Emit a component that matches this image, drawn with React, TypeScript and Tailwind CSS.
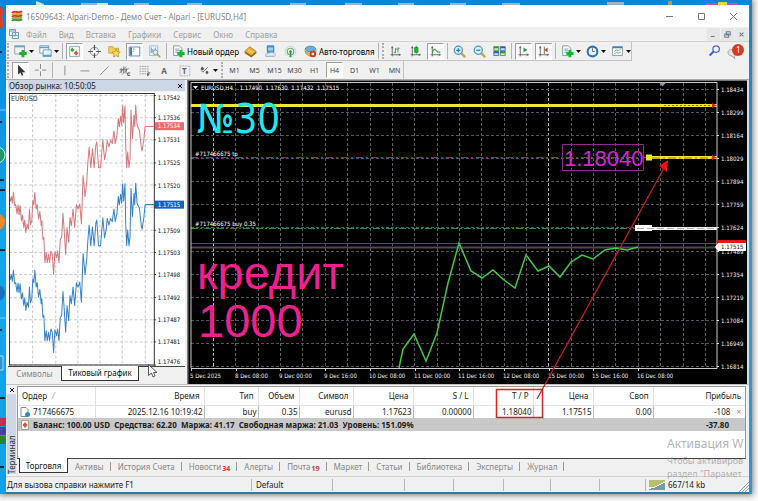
import { type ReactNode } from 'react';
import clsx from 'clsx';

const menu = ['Файл', 'Вид', 'Вставка', 'Графики', 'Сервис', 'Окно', 'Справка'];
const frames = ['M1', 'M5', 'M15', 'M30', 'H1', 'H4', 'D1', 'W1', 'MN'];

const terminalTabs = [
    { name: 'Активы' },
    { name: 'История Счета' },
    { name: 'Новости', count: '34' },
    { name: 'Алерты' },
    { name: 'Почта', count: '19' },
    { name: 'Маркет' },
    { name: 'Статьи' },
    { name: 'Библиотека' },
    { name: 'Эксперты' },
    { name: 'Журнал' },
];

const columns = [
    { name: 'Время', value: '2025.12.16 10:19:42', width: 'w-[109px]' },
    { name: 'Тип', value: 'buy', width: 'w-[54px]' },
    { name: 'Объем', value: '0.35', width: 'w-[41px]' },
    { name: 'Символ', value: 'eurusd', width: 'w-[54px]' },
    { name: 'Цена', value: '1.17623', width: 'w-[60px]' },
    { name: 'S / L', value: '0.00000', width: 'w-[60px]' },
    { name: 'T / P', value: '1.18040', width: 'w-[60px]' },
    { name: 'Цена', value: '1.17515', width: 'w-[60px]' },
    { name: 'Своп', value: '0.00', width: 'w-[60px]' },
];

const prices = [
    '1.18434', '1.18299', '1.18164', '1.18029', '1.17894', '1.17759', '1.17624',
    '1.17489', '1.17354', '1.17219', '1.17084', '1.16949', '1.16814',
];

const dates = [
    '5 Dec 2025', '8 Dec 08:00', '9 Dec 00:00', '9 Dec 16:00', '10 Dec 08:00', '11 Dec 00:00', '11 Dec 16:00',
    '12 Dec 08:00', '15 Dec 00:00', '15 Dec 16:00', '16 Dec 08:00',
];

const closes =
    '399,368 403,349 414,334 426,361 437,333 448,283 459,243 471,271 482,278 493,270 504,280 515,288 526,255 538,271 549,266 560,277 571,262 582,255 593,259 605,250 616,248 627,250 638,247';

const tickPrices = [
    '1.17542', '1.17536', '1.17531', '1.17525', '1.17520', '', '1.17509',
    '1.17503', '1.17498', '1.17492', '1.17487', '1.17481', '1.17476',
];

// x, y pairs at three units per pixel
const ticks =
    '31,350 34,362 37,348 40,368 43,335 47,375 50,372 54,400 57,373 60,402 63,375 67,420 70,403 74,440 77,418 80,455 84,430 88,445 91,385 94,432 98,420 101,360 104,372 107,335 111,385 114,372 118,415 122,392 126,435 128,420 131,475 134,470 137,545 141,515 144,545 148,520 151,545 155,510 159,520 163,580 167,512 172,530 175,510 179,545 183,475 187,470 191,398 194,440 199,520 203,440 208,485 212,410 216,435 221,385 226,440 231,372 236,385 241,370 246,430 251,285 257,348 262,300 265,250 269,200 274,262 279,205 284,262 289,195 292,185 297,262 303,262 310,178 315,238 320,212 323,180 328,200 333,180 338,190 343,152 347,190 352,165 356,115 359,140 363,108 366,135 369,77 372,128 376,77 378,190 381,262 384,215 388,262 391,235 394,90 398,175 403,105 405,140 408,75 412,135 419,150 425,205 427,212 432,180 436,139 462,139';

const axisFont = '"DejaVu Sans Condensed", "Noto Sans", sans-serif';

function Icon({ children }: { children: ReactNode }) {
    return (
        <svg viewBox="0 0 16 16" className="mx-[2px] size-[13px] shrink-0" fill="none" aria-hidden="true">
            {children}
        </svg>
    );
}

interface ToolProps {
    label: string;
    pressed?: boolean;
    menu?: boolean;
    text?: string;
    children: ReactNode;
}

function Tool({ label, pressed, menu, text, children }: ToolProps) {
    return (
        <button
            type="button"
            aria-label={label}
            className={clsx(
                'flex h-[17px] shrink-0 items-center',
                text ? '' : menu ? 'w-[22px]' : 'w-[17px] justify-center',
                pressed && 'border border-[#fff] border-t-[#a0a0a0] border-l-[#a0a0a0] bg-[#f8f8f8]',
            )}
        >
            <Icon>{children}</Icon>
            {text && <span className="whitespace-nowrap text-[8px] text-black">{text}</span>}
            {menu && (
                <svg viewBox="0 0 5 3" className="h-[3px] w-[5px] shrink-0" aria-hidden="true">
                    <path d="M0 0h5L2.5 3z" fill="#111" />
                </svg>
            )}
        </button>
    );
}

function Separator() {
    return <span className="h-4 w-px shrink-0 bg-[#b4b4b4]" />;
}

function Grip() {
    return <span className="h-4 w-0 shrink-0 border-l-2 border-dotted border-[#b0b0b0]" />;
}

function Axes() {
    return <path d="M4 2v12M2 12h12M3 4l1-2 1 2M12 11l2 1-2 1" stroke="#555" />;
}

function Plus() {
    return <path d="M11 6v9M6.500 10.500h9" stroke="#18b52c" strokeWidth="3.500" />;
}

function Page() {
    return (
        <>
            <path d="M2 1h7l3 3v9H2z" fill="#f7f9fb" stroke="#7b8894" />
            <path d="M4 5h5M4 7h5M4 9h4" stroke="#8297a8" />
        </>
    );
}

function Lens({ plus }: { plus?: boolean }) {
    return (
        <>
            <path d="m10 10 5 5" stroke="#d4a63a" strokeWidth="3" />
            <circle cx="6.5" cy="6.5" r="5" fill="#d5ecfa" stroke="#4a94c8" strokeWidth="1.5" />
            <path d={plus ? 'M4 6.5h5M6.5 4v5' : 'M4 6.5h5'} stroke="#2679b5" strokeWidth="1.5" />
        </>
    );
}

function TitleBar() {
    return (
        <header className="flex h-[22px] items-center bg-white pl-[5px] pr-3">
            <svg viewBox="0 0 12 12" className="size-3" fill="none" strokeWidth="2" aria-hidden="true">
                <path d="M1 3c3-4 6 2 10-2" stroke="#d43a2c" />
                <path d="M1 5c3-4 6 2 10-2" stroke="#e8a92e" />
                <path d="M1 7c3-4 6 2 10-2" stroke="#c9402f" />
                <path d="M1 9c3-4 6 2 10-2" stroke="#8fb53b" />
                <path d="M1 11c3-4 6 2 10-2" stroke="#4d8c34" />
            </svg>
            <h1 className="ml-[3px] grow whitespace-nowrap text-[8px] text-[#858585]">
                16509643: Alpari-Demo - Демо Счет - Alpari - [EURUSD,H4]
            </h1>
            <div className="flex items-center gap-[25px] text-[#777]">
                <button type="button" aria-label="Свернуть">
                    <svg viewBox="0 0 7 7" className="size-[7px]" stroke="currentColor"><path d="M0 3.5h7" /></svg>
                </button>
                <button type="button" aria-label="Развернуть">
                    <svg viewBox="0 0 7 7" className="size-[7px]" stroke="currentColor" fill="none"><path d="M.5.5h6v6h-6z" /></svg>
                </button>
                <button type="button" aria-label="Закрыть">
                    <svg viewBox="0 0 7 7" className="size-[7px]" stroke="currentColor"><path d="m0 0 7 7M7 0 0 7" /></svg>
                </button>
            </div>
        </header>
    );
}

function MenuBar() {
    return (
        <nav className="flex h-[14px] items-center pl-[3px] pr-px text-[#a0a0a0]">
            <svg viewBox="0 0 10 10" className="size-[10px]" fill="#eef5fa" stroke="#6aa0c2" aria-hidden="true">
                <path d="M.5.5h6v6h-6zM3.5 3.5h6v6h-6zM5 7l2-1 2 1M1 2h5" />
            </svg>
            <div className="ml-[7px] flex grow gap-3">
                {menu.map((item) => (
                    <button key={item} type="button" className="text-[8px]">{item}</button>
                ))}
            </div>
            <div className="flex gap-px text-[#6c7d93]">
                {['M1 7h5', 'M3 1h5v4H3zM1 4h5v4H1z', 'm2 2 5 5M7 2 2 7'].map((d) => (
                    <button key={d} type="button" aria-label="Окно графика" className="flex h-[13px] w-[13px] items-center justify-center bg-[#e6e6e6]">
                        <svg viewBox="0 0 9 9" className="size-[7px]" fill="none" stroke="currentColor" strokeWidth="1.3"><path d={d} /></svg>
                    </button>
                ))}
            </div>
        </nav>
    );
}

function MainToolbar() {
    return (
        <div className="flex h-5 items-center border-t border-[#d4d4d4]">
            <div className="flex h-full items-center gap-[3px] border-r border-b border-[#c4c4c4] pl-px">
                <Grip />
                <Tool label="Новый график" menu>
                    <path d="M1 1h12v10H1z" fill="#fff" stroke="#6f8faf" /><path d="M1 2h12" stroke="#6f9fcf" strokeWidth="2" /><Plus />
                </Tool>
                <Tool label="Профили" menu>
                    <path d="M1 1h11v9H1z" fill="#fff" stroke="#5a8fbe" /><path d="M5 6h10v8H5z" fill="#e5f1fa" stroke="#5a8fbe" /><path d="M1 3h11M5 13h10" stroke="#5a9fd4" strokeWidth="2" />
                </Tool>
                <Separator />
                <Tool label="Обзор рынка" pressed>
                    <path d="M2 2h12v12H2z" fill="#fff" stroke="#5c9dc9" /><path d="m5 3 3 3-3 3-2-3z" fill="#29a83d" /><path d="m10 7 3 3-3 3-3-3z" fill="#e0552b" />
                </Tool>
                <Tool label="Окно данных">
                    <circle cx="8" cy="8" r="5" stroke="#777" /><path d="M8 0v6M8 10v6M0 8h6M10 8h6" stroke="#555" strokeWidth="1.5" />
                </Tool>
                <Tool label="Навигатор">
                    <path d="M1 2h5l1 2h6v6H1z" fill="#f4cf5b" stroke="#c69c2e" /><path d="m10 5 1.600 3.200 3.400.5-2.500 2.500.6 3.500-3.100-1.700-3.100 1.700.6-3.500L5 8.700l3.400-.5z" fill="#ffdf52" stroke="#b98d22" />
                </Tool>
                <Tool label="Терминал" pressed>
                    <path d="M1.500 2.500h13v11h-13z" fill="#fff" stroke="#3f7fb8" /><path d="M2 3h3v10H2z" fill="#3f7fb8" /><path d="M6 5h2M6 8h1" stroke="#3f7fb8" />
                </Tool>
                <Tool label="Тестер стратегий">
                    <path d="M2 1h10v12H2z" fill="#eef5fa" stroke="#9ab3c7" /><path d="M4 3v7M6 5v4M9 3v4" stroke="#4a84b5" /><circle cx="9" cy="9" r="3" fill="#d7ecf8" stroke="#6a92ad" /><path d="m11 11 4 4" stroke="#c9a243" strokeWidth="2" />
                </Tool>
                <Separator />
                <Tool label="Новый ордер" text="Новый ордер"><Page /><Plus /></Tool>
                <Tool label="MetaEditor">
                    <path d="m1 8 6-6 8 6-6 6z" fill="#e9b53b" stroke="#a9761b" /><path d="m1 9 8 5 6-5" stroke="#9a6a18" strokeWidth="2" /><path d="m5 6 6 4" stroke="#ffe391" />
                </Tool>
                <Tool label="VPS">
                    <path d="M4 1h8v8H4z" fill="#4aa6e0" stroke="#2478b4" /><path d="M5 4h6M5 6h6" stroke="#d9f0ff" /><path d="M2 14c-1-4 3-4 4-4 3-2 5-1 6 0 3 0 3 4 0 4z" fill="#dce8f2" stroke="#89a5bc" />
                </Tool>
                <Tool label="Сигналы">
                    <circle cx="8" cy="8" r="6.500" stroke="#b7cfd9" /><circle cx="8" cy="8" r="4" stroke="#6bb26e" strokeWidth="1.500" /><circle cx="8" cy="8" r="1.500" fill="#2f9440" /><path d="M8 8v7" stroke="#2f9440" strokeWidth="2" />
                </Tool>
                <Tool label="Авто-торговля" text="Авто-торговля">
                    <path d="M1 7c2 4 10 4 14 0-1 9-12 9-14 0" fill="#f0c341" stroke="#b98d22" /><ellipse cx="8" cy="5" rx="6.500" ry="3.500" fill="#6ab0dc" stroke="#3a7da8" /><circle cx="11" cy="11" r="4" fill="#d93622" /><path d="M9.500 9.500h3v3h-3z" fill="#fff" />
                </Tool>
                <Separator />
                <Grip />
                <Tool label="Бары"><Axes /><path d="M8 4v6M6 9h2M8 5h2M11 3v6M11 4h2" stroke="#239a35" /></Tool>
                <Tool label="Свечи"><Axes /><path d="M9 1v10" stroke="#178929" /><path d="M7 3h4v6H7z" fill="#24b83c" stroke="#178929" /></Tool>
                <Tool label="Линия" pressed><Axes /><path d="M4 10c2-7 4-5 5-3s3 2 5 2" stroke="#2a9c3b" strokeWidth="1.300" /></Tool>
                <Separator />
                <Tool label="Увеличить"><Lens plus /></Tool>
                <Tool label="Уменьшить"><Lens /></Tool>
                <Tool label="Расположить окна">
                    <path d="M1 2h6v5H1zM9 8h6v5H9z" fill="#cfeabf" stroke="#3b8f34" /><path d="M9 2h6v5H9zM1 8h6v5H1z" fill="#cfe0f7" stroke="#2b5fae" /><path d="M1 3h6M9 9h6" stroke="#3b8f34" strokeWidth="2" /><path d="M9 3h6M1 9h6" stroke="#2b5fae" strokeWidth="2" />
                </Tool>
                <Separator />
                <Tool label="Автопрокрутка" pressed><Axes /><path d="m8 3 5 3-5 3z" fill="#27a53a" /></Tool>
                <Tool label="Сдвиг графика" pressed><Axes /><path d="M9 2v9" stroke="#555" /><path d="m9 6 4-3v6z" fill="#b34a2b" /></Tool>
                <Separator />
                <Tool label="Индикаторы" menu><Page /><Plus /></Tool>
                <Tool label="Периоды" menu>
                    <circle cx="8" cy="8" r="6" fill="#eaf5fd" stroke="#2a73b5" strokeWidth="2.500" /><path d="M8 4v4h3" stroke="#555" />
                </Tool>
                <Tool label="Шаблоны" menu>
                    <path d="M2 2h12v11H2z" fill="#fff" stroke="#6b8fa8" /><path d="M2 3h12" stroke="#3f80b6" strokeWidth="2" /><path d="m4 8 3-2 2 1 3-2M4 11l3-2 2 1 3-1" stroke="#469a4b" />
                </Tool>
            </div>
            <div className="flex grow items-center justify-end gap-1 pr-1">
                <button type="button" aria-label="Поиск">
                    <Icon><circle cx="10" cy="5" r="4" stroke="#4166c9" strokeWidth="1.500" /><path d="m7 8-5 5" stroke="#4166c9" strokeWidth="2.500" /></Icon>
                </button>
                <button type="button" aria-label="Уведомления: 1" className="flex">
                    <svg viewBox="0 0 18 16" className="h-4 w-[18px]" aria-hidden="true">
                        <path d="M1 8c0-3 8-4 9 0 1 3-2 4-3 4l1 3-3-3c-3 0-4-2-4-4" fill="#e4e4e4" stroke="#aaa" />
                        <circle cx="11" cy="6" r="6" fill="#d83a26" />
                        <text x="9" y="9" fontSize="8" fill="#fff">1</text>
                    </svg>
                </button>
            </div>
        </div>
    );
}

function DrawToolbar() {
    return (
        <div className="flex h-[18px]">
            <div className="flex items-center gap-[3px] border-r border-[#c4c4c4] pl-px">
                <Grip />
                <Tool label="Курсор" pressed><path d="M5 1v12l3-2.500 1.500 4 2-1-1.500-3.500H14z" fill="#333" /></Tool>
                <Tool label="Перекрестие"><path d="M8 0v6M8 9v6M1 7.500h5M10 7.500h5" stroke="#777" /></Tool>
                <Separator />
                <Tool label="Вертикальная линия"><path d="M8.500 2v12" stroke="#777" /></Tool>
                <Tool label="Горизонтальная линия"><path d="M3 8.500h11" stroke="#777" /></Tool>
                <Tool label="Трендовая линия"><path d="m3 13 10-10" stroke="#777" /></Tool>
                <Tool label="Канал"><path d="m2 11 8-8M5 13l8-8M4 5v6M7 3v8M10 5v7M2 7h9" stroke="#666" /><path d="M15 11h-3v3h3" stroke="#333" /></Tool>
                <Tool label="Фибоначчи"><path d="M2 3h11M2 6h11M2 9h11M2 12h8" stroke="#888" strokeDasharray="2 1" /><path d="M12 15v-4h3M12 13h2" stroke="#333" /></Tool>
                <Tool label="Текст"><text x="4" y="12" fontSize="10" fontWeight="700" fill="#666">A</text></Tool>
                <Tool label="Метка"><path d="M2.500 2.500h12v12h-12z" stroke="#888" strokeDasharray="1 1" /><text x="5" y="12" fontSize="10" fontWeight="700" fill="#666">T</text></Tool>
                <Tool label="Стрелки" menu><path d="m5 3 3 3-3 2-2-2zM11 8l2 2-2 3-2-3z" fill="#555" /><path d="m4 8 2 2 6-6" stroke="#555" /></Tool>
                <Grip />
                {frames.map((frame) => (
                    <button
                        key={frame}
                        type="button"
                        className={clsx(
                            'h-4 w-[17px] text-center text-[7px] text-[#444]',
                            frame === 'H4' && 'border border-white border-t-[#a0a0a0] border-l-[#a0a0a0] bg-[#f8f8f8]',
                        )}
                    >
                        {frame}
                    </button>
                ))}
            </div>
        </div>
    );
}

function TickChart() {
    return (
        <svg viewBox="7 91 180 273" className="block w-full" fontFamily={axisFont} fontSize="6">
            <path d="M8 92h177v272H8z" fill="#fff" />
            {[33, 56, 78, 100, 122, 145].map((x) => (
                <path key={x} d={`M${x}.5 94v269`} stroke="#c8c8c8" strokeDasharray="3 2" />
            ))}
            {tickPrices.map((price, i) => {
                const y = Math.round(94.6 + i * 22.35);
                return (
                    <g key={i}>
                        <path d={`M10 ${y}.5h144`} stroke="#ccc" strokeDasharray="3 2" />
                        <path d={`M154 ${y}.5h2`} stroke="#222" />
                        <text x="158" y={i === 0 ? 100 : i === 12 ? 363 : y + 3} fill="#111">{price}</text>
                    </g>
                );
            })}
            <g transform="translate(0 80) scale(.33333)" fill="none" strokeWidth="3" strokeLinejoin="round">
                <polyline points={ticks} stroke="#d9777a" />
                <polyline points={ticks} stroke="#3583cd" transform="translate(0 233)" />
            </g>
            <path d="M10.500 93.500h144v270h-144z" fill="none" stroke="#333" />
            <path d="M155 122h29v8h-29z" fill="#ee6a6a" />
            <path d="M155 200h29v8h-29z" fill="#0a62d8" />
            <g fill="#fff">
                <text x="158" y="128">1.17534</text>
                <text x="158" y="206">1.17515</text>
            </g>
            <text x="12" y="101" fontSize="7" fill="#333">EURUSD</text>
        </svg>
    );
}

function MarketWatch() {
    return (
        <section className="flex flex-col">
            <div className="mx-[2px] flex h-[11px] items-center justify-between bg-[#ccd6e4] px-px">
                <h2 className="text-[8px] text-[#222]">Обзор рынка: 10:50:05</h2>
                <button type="button" aria-label="Закрыть обзор рынка" className="pr-[2px]">
                    <svg viewBox="0 0 4 4" className="size-1" stroke="#111"><path d="m0 0 4 4M4 0 0 4" /></svg>
                </button>
            </div>
            <TickChart />
            <div className="mx-[2px] flex h-[15px] border-t border-[#444] text-[8px]">
                <button type="button" className="w-[53px] text-[#888]">Символы</button>
                <button type="button" className="-mt-px w-[78px] border border-t-0 border-[#333] bg-white text-[#111]">Тиковый график</button>
            </div>
        </section>
    );
}

function PriceChart() {
    return (
        <svg viewBox="187 80 562 304" className="block w-full" fontFamily={axisFont} fontSize="6" fill="none">
            <path d="M187 80h562v304H187z" fill="#000" />
            <path d="M187 80h562M187.500 80v304" stroke="#777" strokeWidth="2" />
            {Array.from({ length: 23 }, (_, i) => {
                const x = Math.round(213 + i * 22.36);
                return (
                    <path
                        key={i}
                        d={`M${x}.5 83v285`}
                        stroke={i === 0 || i === 15 ? '#b5b5b5' : '#5c5c68'}
                        strokeDasharray="3 2"
                    />
                );
            })}
            {prices.map((price, i) => {
                const y = Math.round(89 + i * 23.08);
                return (
                    <g key={price}>
                        <path d={`M191 ${y}.5h526`} stroke="#545462" strokeDasharray="3 2" />
                        <path d={`M717 ${y}.5h2`} stroke="#ddd" />
                        <text x="721" y={y + 3} fill="#eee">{price}</text>
                    </g>
                );
            })}
            {dates.map((date, i) => {
                const x = Math.round(190 + i * 44.7);
                return (
                    <g key={date}>
                        <path d={`M${x + 1}.5 368v3`} stroke="#ccc" />
                        <text x={x} y="378" fill="#eee">{date}</text>
                    </g>
                );
            })}
            <path d="M191 157.500h526" stroke="#b82424" strokeDasharray="7 3 2 3" />
            <path d="M191 228.500h526" stroke="#3f7f49" strokeDasharray="7 2 2 2" />
            <path d="M191 247.500h526" stroke="#4a4a4f" strokeWidth="2" />
            <path d="M191 243.500h526" stroke="#a82828" />
            <path d="M191 105.500h526" stroke="#f0e632" strokeWidth="3" />
            <path d="M664 105.500h53" stroke="#c8502a" strokeDasharray="2 2" />
            <path d="M646 157.500h71" stroke="#f0e632" strokeWidth="3" />
            <path d="M646 154.500h6v6h-6z" fill="#f0e632" />
            <path d="M652 158h65" stroke="#c86a1e" strokeDasharray="8 3 2 3" />
            <path d="m712 103 5 2.500-5 2.500zM712 155l5 2.500-5 2.500z" fill="#d8281c" />
            <path d="M635 225h17v6h-17z" fill="#fff" />
            <path d="M652 228.500h65" stroke="#f4f4f4" strokeWidth="3" />
            <path d="M637 228.500h80" stroke="#9bbb9b" strokeDasharray="7 3" />
            <polyline points={closes} stroke="#44c844" strokeWidth="1.500" />
            <path d="M191 368.500V82.500h526v286z" stroke="#ccc" />
            <path d="M659 82.500h7l-3.500 4z" fill="#8d99aa" />
            <path d="M717 240h29v5h-29z" fill="#e01818" />
            <path d="m715 247 3-4h28v8h-28z" fill="#fff" />
            <text x="721" y="249" fill="#111">1.17515</text>
            <g fill="#fff">
                <path d="M193 86h5l-2.500 3z" />
                <text x="201" y="90">EURUSD,H4&#160;&#160;&#160; 1.17490&#160; 1.17630&#160; 1.17432&#160; 1.17515</text>
                <text x="195" y="156">#717466675 tp</text>
                <text x="195" y="226">#717466675 buy 0.35</text>
            </g>
            <text x="197" y="133" fontSize="40" fill="#22e6f0">№30</text>
            <g fontFamily='"Liberation Sans", Arial, sans-serif'>
                <text x="197" y="289" fontSize="47" fill="#ee2090">кредит</text>
                <text x="198" y="337" fontSize="47" fill="#ee2090">1000</text>
                <path d="M562.500 144.500h81v26h-81z" stroke="#8a2a8a" />
                <text x="564" y="166" fontSize="22" fill="#d424d4">1.18040</text>
            </g>
            <path d="M748 80v304" stroke="#ddd" strokeWidth="2" />
        </svg>
    );
}

function TradeTable() {
    return (
        <table className="w-full table-fixed border-collapse whitespace-nowrap text-right text-[8px] text-[#222]">
            <thead>
                <tr className="h-[18px] border-b border-[#e4e4e4]">
                    <th scope="col" className="w-[77px] border-r border-[#e2e2e2] pl-1 text-left font-normal">
                        Ордер <span className="ml-1 text-[#999]">⁄</span>
                    </th>
                    {columns.map((col, i) => (
                        <th key={i} scope="col" className={clsx('border-r border-[#e2e2e2] pr-1 font-normal', col.width)}>
                            {col.name}
                        </th>
                    ))}
                    <th scope="col" className="pr-1 font-normal">Прибыль</th>
                </tr>
            </thead>
            <tbody>
                <tr className="h-[13px]">
                    <td className="border-r border-[#e2e2e2] pl-[2px] text-left">
                        <span className="flex items-center gap-[3px]">
                            <svg viewBox="0 0 10 10" className="size-[10px]" aria-hidden="true">
                                <path d="M1 .5h5l2 2v7H1z" fill="#fff" stroke="#7d8f9d" /><circle cx="7.500" cy="7.500" r="2.500" fill="#2b8dc9" />
                            </svg>
                            717466675
                        </span>
                    </td>
                    {columns.map((col, i) => (
                        <td key={i} className="border-r border-[#bbb] pr-px">{col.value}</td>
                    ))}
                    <td className="pr-1">
                        -108 <button type="button" aria-label="Закрыть ордер" className="ml-1 text-[#888]">×</button>
                    </td>
                </tr>
                <tr className="h-[13px] bg-[#c8c8c8] font-bold text-[#222]">
                    <td colSpan={10} className="pl-[2px] text-left">
                        <span className="flex items-center gap-[3px]">
                            <svg viewBox="0 0 10 10" className="size-[10px]" aria-hidden="true">
                                <path d="M1.500.5h7v9h-7z" fill="#fff" stroke="#a99" /><path d="m5 2 2.500 3L5 8 2.500 5z" fill="#d2552c" />
                            </svg>
                            Баланс: 100.00 USD&#160; Средства: 62.20&#160; Маржа: 41.17&#160; Свободная маржа: 21.03&#160; Уровень: 151.09%
                        </span>
                    </td>
                    <td className="pr-4">-37.80</td>
                </tr>
            </tbody>
        </table>
    );
}

function Terminal() {
    return (
        <section className="flex border-t border-[#c4c4c4] pt-px">
            <div className="flex w-[11px] shrink-0 flex-col items-center">
                <button type="button" aria-label="Закрыть терминал" className="flex h-2 items-center">
                    <svg viewBox="0 0 4 4" className="size-1" stroke="#111"><path d="m0 0 4 4M4 0 0 4" /></svg>
                </button>
                <h2 className="flex grow rotate-180 items-center justify-start bg-[#ccd6e4] text-[8px] leading-[9px] text-[#333] [writing-mode:vertical-rl]">
                    Терминал
                </h2>
            </div>
            <div className="min-w-0 grow pr-[3px]">
                <div className="min-h-[72px] border border-b-0 border-[#999] bg-white">
                    <TradeTable />
                </div>
                <div className="flex h-4 items-start border-t border-[#444] pl-[2px] text-[8px] text-[#888]">
                    <button type="button" className="-mt-px h-[15px] w-[49px] border border-t-0 border-[#333] bg-white text-[#111]">Торговля</button>
                    <div className="flex h-[14px] items-center gap-[7px] pl-[7px]">
                        {terminalTabs.map((tab) => (
                            <div key={tab.name} className="flex items-center gap-[6px]">
                                <button type="button" className="flex h-[11px] whitespace-nowrap">
                                    {tab.name}
                                    {tab.count && <span className="ml-px pt-[2px] text-[7px] font-bold text-[#d33]">{tab.count}</span>}
                                </button>
                                <span className="h-[9px] w-px bg-[#999]" />
                            </div>
                        ))}
                    </div>
                </div>
            </div>
        </section>
    );
}

function StatusBar() {
    return (
        <footer className="mt-[2px] flex h-4 items-center border-t border-[#d0d0d0] text-[8px] text-[#222]">
            <span className="w-[245px] shrink-0 pl-px">Для вызова справки нажмите F1</span>
            <span className="flex h-3 w-[82px] items-center border-x border-[#b8b8b8] pl-1">Default</span>
            <span className="h-3 w-[72px] border-r border-[#b8b8b8]" />
            <span className="h-3 w-[49px] border-r border-[#b8b8b8]" />
            <span className="h-3 w-[50px] border-r border-[#b8b8b8]" />
            <span className="h-3 w-[47px] border-r border-[#b8b8b8]" />
            <span className="h-3 w-[49px] border-r border-[#b8b8b8]" />
            <span className="h-3 w-[46px] border-r border-[#b8b8b8]" />
            <svg viewBox="0 0 17 10" className="ml-[3px] h-[10px] w-[17px]" strokeWidth="1.200" aria-hidden="true">
                <path d="M1 0v7M3 0v7M5 0v7M7 0v6M9 0v5M11 0v4M13 0v3M15 0v2" stroke="#8b9e22" />
                <path d="M1 9v1M3 8v2M5 8v2M7 7v3M9 6v4M11 5v5M13 4v6M15 3v7" stroke="#1f6578" />
            </svg>
            <span className="ml-[2px] grow whitespace-nowrap">667/14 kb</span>
            <svg viewBox="0 0 11 11" className="h-[11px] w-[11px] self-end" stroke="#999" aria-hidden="true">
                <path d="m1 11 10-10M4 11l7-7M7 11l4-4" />
            </svg>
        </footer>
    );
}

function Desktop() {
    return (
        <svg viewBox="0 0 752 494" className="absolute inset-0 w-full" aria-hidden="true">
            <path d="M0 6l4 5-2 6 2 8-4 4z" fill="#d4412e" />
            <path d="M36 1l8 3v2h-8zM144 4h16M92 3h16v2H92z" fill="#d8e0d0" />
            <path d="M81 3h16v3H81zM134 3h15v3h-15zM187 3h15v3h-15zM290 3h16v3h-16zM345 3h17v3h-17zM398 3h16v3h-16zM450 3h16v3h-16zM502 3h18v3h-18zM607 2h17v4h-17z" fill="#9fb3c4" />
            <path d="M706 3h32v3h-32z" fill="#c94fa0" /><path d="M718 2h9v4h-9z" fill="#e8d24a" /><path d="M668 1h4v4h-4z" fill="#e08a2c" />
            <circle cx="-3" cy="155" r="8" fill="#1d9a6c" stroke="#d6efe4" />
            <circle cx="-3" cy="222" r="8" fill="#f08a24" />
            <circle cx="-3" cy="293" r="8" fill="#1c6fc0" />
            <path d="M0 110h6M0 318h6" stroke="#7cd0f2" />
            <path d="M0 52h2M0 122h2M0 180h4M0 190h5M0 250h5M0 330h2M0 398h5M0 467h4" stroke="#123" strokeWidth="2" />
            <path d="M0 356h3v14H0" fill="#2b93dd" stroke="#a8d8f4" />
            <path d="M0 418h6v8H0z" fill="#c03246" /><path d="M0 427h6v8H0z" fill="#4b3fb0" /><path d="M0 436h6v8H0z" fill="#20883a" />
        </svg>
    );
}

export default function App() {
    return (
        <div className='min-h-screen overflow-hidden bg-[#fafafa] pb-[7px] pr-[6px] font-["Noto_Sans",sans-serif] leading-[11px]'>
            <div className="relative bg-gradient-to-b from-[#0a86d8] via-[#12a5ee] to-[#11a0e8] shadow-[0_0_6px_1px_#777]">
                <Desktop />
                <div className="relative pl-[6px] pr-[3px] pt-[5px]">
                    <div className="border-b-2 border-[#2c7ba4] bg-[#f0f0f0]">
                        <TitleBar />
                        <MenuBar />
                        <MainToolbar />
                        <DrawToolbar />
                        <main className="grid grid-cols-[181px_1fr] border-t border-[#aaa]">
                            <MarketWatch />
                            <PriceChart />
                        </main>
                        <Terminal />
                        <StatusBar />
                    </div>
                </div>
                <div className="pointer-events-none absolute right-[3px] bottom-[14px] w-[82px] whitespace-nowrap text-[#999]/75">
                    <p className="text-[12px] leading-5">Активация W</p>
                    <p className="text-[9px] leading-[13px]">Чтобы активиров</p>
                    <p className="text-[9px] leading-[13px]">раздел "Парамет</p>
                </div>
                <svg viewBox="0 0 752 494" className="pointer-events-none absolute inset-0 w-full" fill="none" aria-hidden="true">
                    <path d="M496.500 389.500h46v28h-46z" stroke="#dd2222" strokeWidth="1.500" />
                    <path d="M537 399 664 168" stroke="#c22020" strokeWidth="1.300" />
                    <path d="m668 160-9 6 8 6z" fill="#f01010" />
                    <path d="M148.500 364.500v11l3-2.500 1.500 4 2-1-1.500-3.500h3.500z" fill="#fff" stroke="#333" strokeWidth=".8" />
                </svg>
            </div>
        </div>
    );
}
